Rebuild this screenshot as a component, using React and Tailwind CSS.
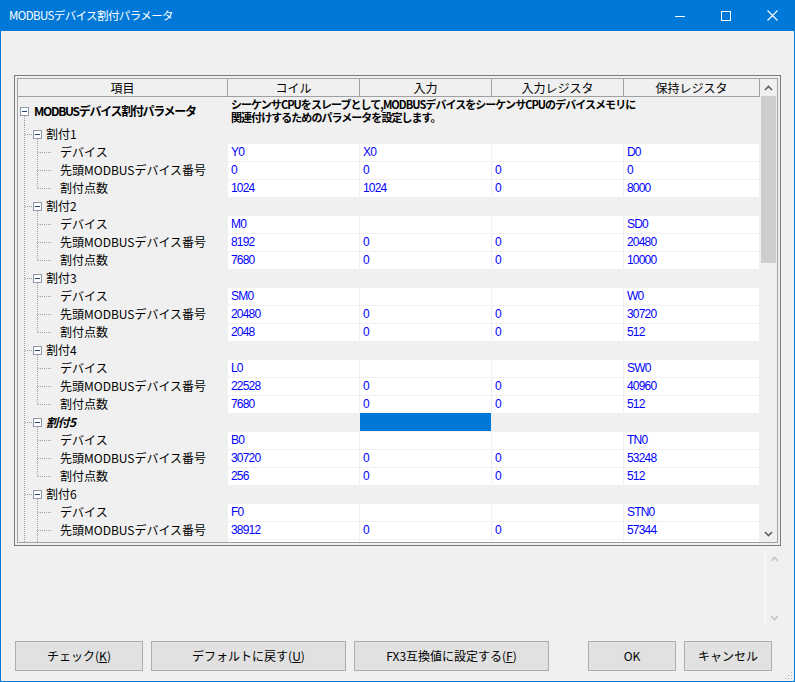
import React from 'react';

const JP = "font-['Noto_Sans_CJK_JP',sans-serif]";
const DOT = { stroke: '#a0a0a0', strokeDasharray: '1 1' };

const groups = [
  { name: '割付1', rows: [['Y0', 'X0', '', 'D0'], ['0', '0', '0', '0'], ['1024', '1024', '0', '8000']] },
  { name: '割付2', rows: [['M0', '', '', 'SD0'], ['8192', '0', '0', '20480'], ['7680', '0', '0', '10000']] },
  { name: '割付3', rows: [['SM0', '', '', 'W0'], ['20480', '0', '0', '30720'], ['2048', '0', '0', '512']] },
  { name: '割付4', rows: [['L0', '', '', 'SW0'], ['22528', '0', '0', '40960'], ['7680', '0', '0', '512']] },
  { name: '割付5', focus: true, rows: [['B0', '', '', 'TN0'], ['30720', '0', '0', '53248'], ['256', '0', '0', '512']] },
  // last row is scrolled out of view, only its top edge shows
  { name: '割付6', rows: [['F0', '', '', 'STN0'], ['38912', '0', '0', '57344'], ['', '', '', '']] },
];
const labels = ['デバイス', '先頭MODBUSデバイス番号', '割付点数'];
const colW = ['w-[132px]', 'w-[132px]', 'w-[132px]', 'w-[136px]'];

function Box({ x, y }) {
  return (
    <g>
      <rect x={x + 0.5} y={y + 0.5} width="8" height="8" fill="#fff" stroke="#8e98ab" />
      <line x1={x + 2} x2={x + 7} y1={y + 4.5} y2={y + 4.5} stroke="#1f3d7a" />
    </g>
  );
}

function Chevron({ up, color }) {
  return (
    <svg width="9" height="6" viewBox="0 0 9 6">
      <path d={up ? 'M1 5 L4.5 1.5 L8 5' : 'M1 1 L4.5 4.5 L8 1'} fill="none" stroke={color} strokeWidth="1.6" />
    </svg>
  );
}

function TitleBar() {
  return (
    <div className="h-[31px] shrink-0 bg-[#0078d7] flex items-center text-white">
      <span className="pl-[9px] text-[11.5px] tracking-[-0.6px]">MODBUSデバイス割付パラメータ</span>
      <div className="ml-auto flex">
        <div className="w-[46px] h-[31px] flex items-center justify-center">
          <svg width="10" height="10"><line x1="0" x2="10" y1="5.5" y2="5.5" stroke="#fff" /></svg>
        </div>
        <div className="w-[46px] h-[31px] flex items-center justify-center">
          <svg width="10" height="10"><rect x="0.5" y="0.5" width="9" height="9" fill="none" stroke="#fff" /></svg>
        </div>
        <div className="w-[46px] h-[31px] flex items-center justify-center">
          <svg width="11" height="11">
            <path d="M0.5 0.5 L10.5 10.5 M10.5 0.5 L0.5 10.5" stroke="#fff" strokeWidth="1.1" />
          </svg>
        </div>
      </div>
    </div>
  );
}

function Header() {
  const cols = ['コイル', '入力', '入力レジスタ', '保持レジスタ'];
  return (
    <div className="flex h-[18px] shrink-0 border-b border-[#a0a0a0] text-[12px] leading-[17px]">
      <div className="w-[210px] shrink-0 border-r border-[#a0a0a0] text-center">項目</div>
      {cols.map((c, i) => (
        <div key={c} className={`${colW[i]} shrink-0 border-r border-[#a0a0a0] text-center`}>{c}</div>
      ))}
    </div>
  );
}

function DescRow() {
  return (
    <div className="flex h-[28px] shrink-0">
      <div className="w-[210px] shrink-0 flex items-center">
        <svg width="16" height="28" className="shrink-0">
          <line x1="6.5" x2="6.5" y1="19" y2="28" {...DOT} />
          <Box x={2} y={10} />
        </svg>
        <span className="text-[12px] font-bold tracking-[-1.3px] whitespace-nowrap">MODBUSデバイス割付パラメータ</span>
      </div>
      <div className="flex-1 pl-[3px] pt-[1px] text-[11px] font-bold tracking-[-0.95px] whitespace-nowrap">
        <div className="h-[13px] leading-[13px]">シーケンサCPUをスレーブとして,MODBUSデバイスをシーケンサCPUのデバイスメモリに</div>
        <div className="h-[13px] leading-[13px]">関連付けするためのパラメータを設定します。</div>
      </div>
    </div>
  );
}

function GroupRow({ g }) {
  return (
    <div className="flex h-[18px] shrink-0">
      <div className="w-[210px] shrink-0 flex items-center">
        <svg width="28" height="18" className="shrink-0">
          <line x1="6.5" x2="6.5" y1="0" y2="18" {...DOT} />
          <line x1="7" x2="15" y1="9.5" y2="9.5" {...DOT} />
          <line x1="19.5" x2="19.5" y1="14" y2="18" {...DOT} />
          <Box x={15} y={5} />
        </svg>
        <span className={`text-[12px] leading-[18px] ${g.focus ? 'font-bold italic tracking-[-0.5px]' : ''}`}>{g.name}</span>
      </div>
      <div className="w-[132px] shrink-0" />
      <div className={`w-[131px] shrink-0 ${g.focus ? 'bg-[#0078d7]' : ''}`} />
    </div>
  );
}

function LeafRow({ label, vals, last }) {
  return (
    <div className="flex h-[18px] shrink-0">
      <div className="w-[210px] shrink-0 flex items-center">
        <svg width="42" height="18" className="shrink-0">
          <line x1="6.5" x2="6.5" y1="0" y2="18" {...DOT} />
          <line x1="19.5" x2="19.5" y1="0" y2={last ? 10 : 18} {...DOT} />
          <line x1="20" x2="33" y1="9.5" y2="9.5" {...DOT} />
        </svg>
        <span className="text-[12px] leading-[18px] whitespace-nowrap">{label}</span>
      </div>
      {vals.map((v, i) => (
        <div
          key={i}
          className={`${colW[i]} shrink-0 h-[18px] bg-white border-t border-r border-[#f0f0f0] pl-[3px] text-[12px] leading-[17px] text-[#0000ff] font-['Liberation_Sans',sans-serif] tracking-[-0.8px]`}
        >
          {v}
        </div>
      ))}
    </div>
  );
}

function ScrollBar() {
  return (
    <div className="w-[17px] shrink-0 flex flex-col bg-[#f0f0f0]">
      <div className="h-[17px] flex items-center justify-center"><Chevron up color="#606060" /></div>
      <div className="h-[167px] mx-[1px] bg-[#cdcdcd]" />
      <div className="flex-1" />
      <div className="h-[17px] flex items-center justify-center"><Chevron color="#606060" /></div>
    </div>
  );
}

function Btn({ w, ml, children }) {
  return (
    <div className={`${w} ${ml} h-[30px] shrink-0 border border-[#adadad] bg-[#e1e1e1] flex items-center justify-center text-[12px] text-black`}>
      {children}
    </div>
  );
}

export default function App() {
  return (
    <div className={`w-[795px] h-[682px] bg-[#f0f0f0] flex flex-col relative overflow-hidden text-black ${JP}`}>
      <TitleBar />
      <div className="flex-1 flex flex-col border-x border-b border-[#0078d7]">
        <div className="ml-[13px] mt-[44px] w-[767px] h-[471px] shrink-0 border border-[#7a7a7a] p-[2px]">
          <div className="w-full h-full border border-[#a0a0a0] flex">
            <div className="w-[742px] shrink-0 flex flex-col overflow-hidden">
              <Header />
              <DescRow />
              {groups.map((g) => (
                <React.Fragment key={g.name}>
                  <GroupRow g={g} />
                  {g.rows.map((r, i) => (
                    <LeafRow
                      key={i}
                      label={r.some(Boolean) ? labels[i] : ''}
                      vals={r}
                      last={i === 2}
                    />
                  ))}
                </React.Fragment>
              ))}
            </div>
            <ScrollBar />
          </div>
        </div>

        <div className="mt-[4px] h-[77px] shrink-0 flex justify-end pr-[12px]">
          <div className="w-[17px] border-l border-[#fbfbfb] flex flex-col justify-between py-[6px]">
            <div className="flex justify-center"><Chevron up color="#c4c4c4" /></div>
            <div className="flex justify-center"><Chevron color="#c4c4c4" /></div>
          </div>
        </div>

        <div className="mt-[14px] ml-[14px] flex">
          <Btn w="w-[128px]">チェック(<span className="underline">K</span>)</Btn>
          <Btn w="w-[195px]" ml="ml-[8px]">デフォルトに戻す(<span className="underline">U</span>)</Btn>
          <Btn w="w-[195px]" ml="ml-[8px]">FX3互換値に設定する(<span className="underline">F</span>)</Btn>
          <Btn w="w-[88px]" ml="ml-[39px]">OK</Btn>
          <Btn w="w-[88px]" ml="ml-[8px]">キャンセル</Btn>
        </div>
      </div>
      <svg width="10" height="10" className="absolute right-[2px] bottom-[2px]">
        {[[8, 2], [8, 5], [5, 5], [8, 8], [5, 8], [2, 8]].map(([x, y]) => (
          <rect key={`${x}-${y}`} x={x} y={y} width="1" height="1" fill="#b8b8b8" />
        ))}
      </svg>
    </div>
  );
}
